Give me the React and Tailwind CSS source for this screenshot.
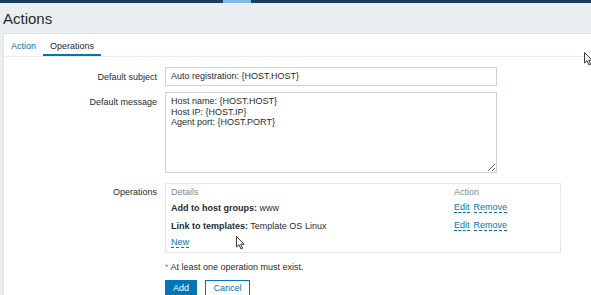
import React from "react";

const Cursor = ({ className }) => (
  <svg className={className} width="9" height="14" viewBox="0 0 9 14">
    <path d="M0.5 0.5 L0.5 11 L3 8.7 L5 13 L6.6 12.3 L4.7 8.2 L8 8.2 Z" fill="#fff" stroke="#222" strokeWidth="0.9" />
  </svg>
);

const LinkText = ({ children }) => (
  <span className="text-[#0275b8] border-b border-dashed border-[#0275b8] leading-[10px]">{children}</span>
);

const FormRow = ({ label, children, labelClass = "" }) => (
  <div className="flex">
    <div className={"w-[161px] shrink-0 text-right pr-[8px] " + labelClass}>{label}</div>
    {children}
  </div>
);

export default function App() {
  return (
    <div
      className="relative w-full h-[295px] overflow-hidden bg-[#ebeef0] text-[9px] text-[#1f2c33]"
      style={{ fontFamily: '"Liberation Sans", Arial, sans-serif' }}
    >
      <div className="flex h-[3px] bg-[#1a3f62]">
        <div className="w-[223px]" />
        <div className="w-[28px] bg-[#80bde6]" />
      </div>

      <div className="h-[30px] flex items-center pl-[3px] text-[15px] leading-none">
        Actions
      </div>

      <div className="ml-[3px] h-[262px] bg-white border-l border-t border-[#dde2e5]">
        <div className="flex h-[23px] border-b border-[#ebeef0]">
          <div className="px-[7px] pt-[6px] text-[#0275b8]">Action</div>
          <div className="px-[7px] pt-[6px] border-b-[2px] border-[#0275b8]">Operations</div>
        </div>

        <div className="flex flex-col pt-[10px]">
          <FormRow label="Default subject" labelClass="pt-[4px]">
            <div className="w-[332px] h-[19px] border border-[#cdd3d7] px-[5px] flex items-center">
              Auto registration: {"{HOST.HOST}"}
            </div>
          </FormRow>

          <FormRow label="Default message" labelClass="pt-[10px]">
            <textarea
              readOnly
              className="mt-[6px] w-[332px] h-[81px] border border-[#cdd3d7] px-[5px] py-[3px] text-[9px] leading-[10.5px] text-[#1f2c33] outline-none"
              style={{ fontFamily: '"Liberation Sans", Arial, sans-serif' }}
              defaultValue={"Host name: {HOST.HOST}\nHost IP: {HOST.IP}\nAgent port: {HOST.PORT}"}
            />
          </FormRow>

          <div className="mt-[10px]">
            <FormRow label="Operations" labelClass="pt-[3px]">
              <div className="w-[396px] h-[70px] border border-[#e3e7ea] px-[5px] pt-[2px]">
                <div className="flex text-[#768d99] h-[11px]">
                  <div className="w-[283px]">Details</div>
                  <div>Action</div>
                </div>
                <div className="flex mt-[5px] h-[11px]">
                  <div className="w-[283px]">
                    <span className="font-bold">Add to host groups:</span> www
                  </div>
                  <div className="flex gap-[4px]">
                    <LinkText>Edit</LinkText>
                    <LinkText>Remove</LinkText>
                  </div>
                </div>
                <div className="flex mt-[7px] h-[11px]">
                  <div className="w-[283px]">
                    <span className="font-bold">Link to templates:</span> Template OS Linux
                  </div>
                  <div className="flex gap-[4px]">
                    <LinkText>Edit</LinkText>
                    <LinkText>Remove</LinkText>
                  </div>
                </div>
                <div className="mt-[5px]">
                  <LinkText>New</LinkText>
                </div>
              </div>
            </FormRow>
          </div>

          <div className="flex mt-[8px]">
            <div className="w-[161px] shrink-0" />
            <div>
              <span className="text-[#e45959]">*</span> At least one operation must exist.
            </div>
          </div>

          <div className="flex mt-[5px]">
            <div className="w-[161px] shrink-0" />
            <div className="flex gap-[8px]">
              <div className="w-[32px] h-[19px] bg-[#0275b8] text-white flex items-center justify-center">Add</div>
              <div className="w-[45px] h-[19px] border border-[#0275b8] text-[#0275b8] flex items-center justify-center">Cancel</div>
            </div>
          </div>
        </div>
      </div>

      <Cursor className="absolute left-[584px] top-[52px]" />
      <Cursor className="absolute left-[236px] top-[236px]" />
    </div>
  );
}
